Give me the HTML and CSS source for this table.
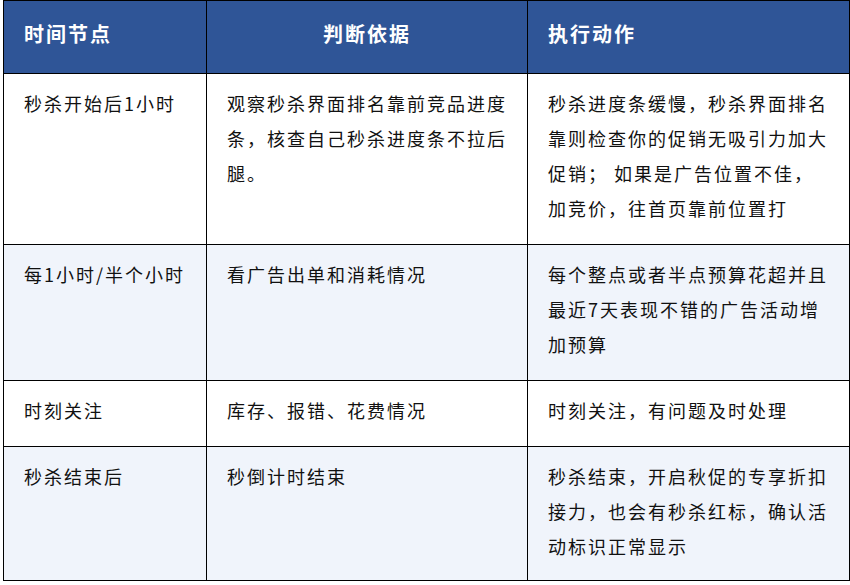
FILE: index.html
```html
<!DOCTYPE html>
<html lang="zh-CN">
<head>
<meta charset="utf-8">
<title>秒杀节点</title>
<link rel="stylesheet" href="styles.css">
</head>
<body>
<table class="plan">
  <colgroup>
    <col class="c1">
    <col class="c2">
    <col class="c3">
  </colgroup>
  <thead>
    <tr>
      <th>时间节点</th>
      <th class="center">判断依据</th>
      <th>执行动作</th>
    </tr>
  </thead>
  <tbody>
    <tr>
      <td>秒杀开始后1小时</td>
      <td>观察秒杀界面排名靠前竞品进度条，核查自己秒杀进度条不拉后腿。</td>
      <td>秒杀进度条缓慢，秒杀界面排名靠则检查你的促销无吸引力加大促销； 如果是广告位置不佳，加竞价，往首页靠前位置打</td>
    </tr>
    <tr class="alt">
      <td>每1小时/半个小时</td>
      <td>看广告出单和消耗情况</td>
      <td>每个整点或者半点预算花超并且最近7天表现不错的广告活动增加预算</td>
    </tr>
    <tr>
      <td>时刻关注</td>
      <td>库存、报错、花费情况</td>
      <td>时刻关注，有问题及时处理</td>
    </tr>
    <tr class="alt last">
      <td>秒杀结束后</td>
      <td>秒倒计时结束</td>
      <td>秒杀结束，开启秋促的专享折扣接力，也会有秒杀红标，确认活动标识正常显示</td>
    </tr>
  </tbody>
</table>
</body>
</html>
```

FILE: styles.css
```css
html, body {
  margin: 0;
  padding: 0;
  background: #ffffff;
}
body {
  padding-left: 3px;
  font-family: "Noto Sans CJK SC", "Noto Sans", sans-serif;
}
.plan {
  width: 846px;
  border-collapse: collapse;
  table-layout: fixed;
}
.c1 { width: 203px; }
.c2 { width: 321px; }
.c3 { width: 322px; }
.plan th,
.plan td {
  border: 1px solid #000000;
  vertical-align: top;
  text-align: left;
  line-height: 35px;
}
.plan th {
  background: #2f5597;
  color: #ffffff;
  font-size: 20px;
  font-weight: 700;
  letter-spacing: 2px;
  padding: 15px 20px 22px;
}
.plan th.center {
  text-align: center;
}
.plan td {
  color: #111111;
  font-size: 18px;
  letter-spacing: 2px;
  padding: 12px 20px 18px;
}
.plan tr.alt td {
  background: #f0f4fb;
}
.plan tr.last td {
  padding-bottom: 16px;
}
```
